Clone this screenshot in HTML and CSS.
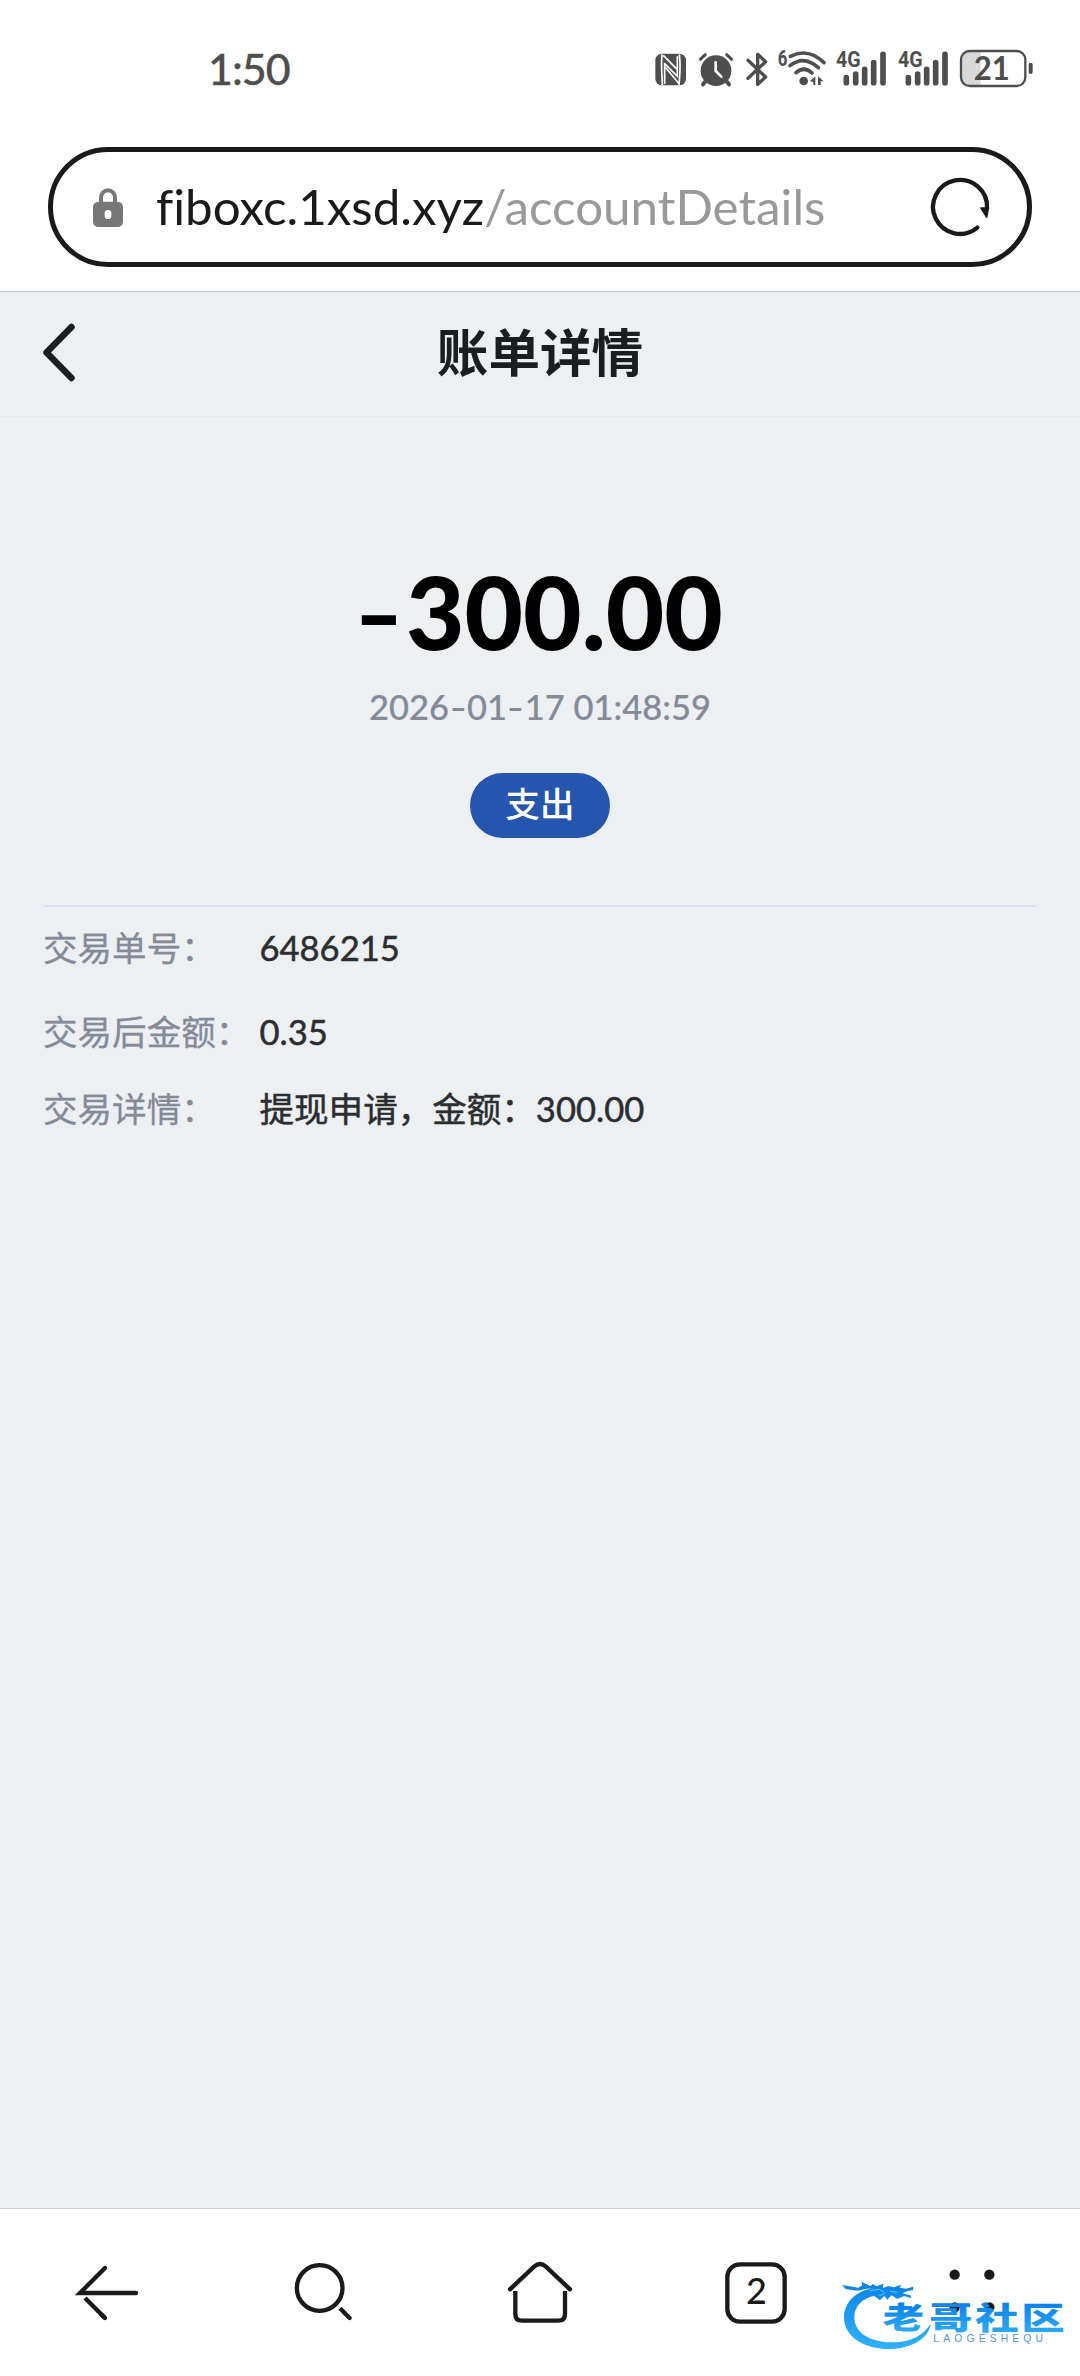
FILE: index.html
```html
<!DOCTYPE html>
<html lang="zh-CN">
<head>
<meta charset="utf-8">
<title>账单详情</title>
<link rel="stylesheet" href="styles.css">
</head>
<body>
<div class="screen">
  <div class="status">
    <span class="clock">1:50</span>
    <div class="status-icons">
      <svg width="42" height="42" viewBox="30 54 126 126">
        <rect x="46" y="71" width="92" height="95" rx="20" fill="#4e4e4e"/>
        <path d="M66 73q-2 22-1 46t2 46M118 73q3 22 2 46t-3 46" fill="none" stroke="#fff" stroke-width="5"/>
        <path d="M70 76l42 43M74 101l38 38v-60M74 98v64M76 112l40 48" fill="none" stroke="#fff" stroke-width="5"/>
      </svg>
      <svg width="48" height="42" viewBox="156 54 144 126" fill="none" stroke="#4e4e4e" stroke-linecap="round">
        <circle cx="228" cy="122" r="46" fill="#4e4e4e" stroke="none"/>
        <path d="M181 88l15-14M275 88l-15-14" stroke-width="9"/>
        <path d="M198 152l-9 11M258 152l9 11" stroke-width="12"/>
        <path d="M227 97v26l17 17" stroke="#fff" stroke-width="8"/>
      </svg>
      <svg width="34" height="42" viewBox="300 54 102 126" fill="none" stroke="#4e4e4e" stroke-width="10" stroke-linecap="round" stroke-linejoin="round">
        <path d="M324 91l53 50-24 22V73l24 22-53 50"/>
      </svg>
      <svg width="58" height="42" viewBox="402 54 174 126" fill="none" stroke="#4e4e4e" stroke-linecap="round">
        <text x="413" y="109" class="net" font-size="64" textLength="29" lengthAdjust="spacingAndGlyphs">6</text>
        <path d="M451 79Q504 52 552 98M450 107Q492 74 535 113M468 128Q492 107 516 129" stroke-width="11"/>
        <circle cx="491" cy="153" r="13" fill="#4e4e4e" stroke="none"/>
        <path d="M510 153l16-14v26h-6v-8zM534 139l17 15h-9v11h-8z" fill="#4e4e4e" stroke="none"/>
      </svg>
      <svg width="62" height="42" viewBox="576 54 186 126" stroke="#4e4e4e" stroke-width="17" stroke-linecap="round">
        <text x="588" y="112" class="net" font-size="64" textLength="74" lengthAdjust="spacingAndGlyphs">4G</text>
        <path d="M619 143v15M647 132v26M674 118v40M701 98v60M729 73v85"/>
      </svg>
      <svg width="62" height="42" viewBox="762 54 186 126" stroke="#4e4e4e" stroke-width="17" stroke-linecap="round">
        <text x="774" y="112" class="net" font-size="64" textLength="74" lengthAdjust="spacingAndGlyphs">4G</text>
        <path d="M805 143v15M833 132v26M860 118v40M887 98v60M915 73v85"/>
      </svg>
      <svg width="84" height="42" viewBox="948 54 252 126">
        <path d="M1022 64H988q-24 0-24 24v54q0 24 24 24h34z" fill="#d8d8d8"/>
        <rect x="963" y="63" width="193" height="105" rx="26" fill="none" stroke="#4e4e4e" stroke-width="7"/>
        <rect x="1166" y="98" width="12" height="34" rx="6" fill="#4e4e4e"/>
        <text x="1001" y="150" class="battery" textLength="108" lengthAdjust="spacingAndGlyphs">21</text>
      </svg>
    </div>
  </div>

  <div class="address">
    <svg class="lock" width="30" height="39" viewBox="189 174 90 117">
      <path d="M213 222v-19a21 22 0 0 1 42 0v19" fill="none" stroke="#777" stroke-width="12"/>
      <rect x="189" y="215" width="90" height="76" rx="16" fill="#777"/>
      <rect x="224" y="240" width="20" height="27" rx="10" fill="#fff"/>
    </svg>
    <span class="url">fiboxc.1xsd.xyz<span class="path">/accountDetails</span></span>
    <svg class="reload" width="60" height="60" viewBox="1170 141 180 180">
      <path d="M1312 293A81 81 0 1 1 1341 236" fill="none" stroke="#1a1a1a" stroke-width="13" stroke-linecap="round"/>
      <path d="M1323 234h22l-5 27z" fill="#1a1a1a" stroke="#1a1a1a" stroke-width="5" stroke-linejoin="round"/>
    </svg>
  </div>

  <header class="titlebar">
    <svg class="back" width="36" height="62" viewBox="0 0 36 62" fill="none" stroke="#1b1e21" stroke-width="6.5" stroke-linecap="round" stroke-linejoin="round"><path d="M29.500 6L4.500 31.500l25 25.500"/></svg>
    <h1>账单详情</h1>
  </header>

  <main class="content">
    <div class="amount"><span class="minus">-</span>300.00</div>
    <div class="date">2026<i>-</i>01<i>-</i>17 01:48:59</div>
    <div class="badge">支出</div>
    <dl class="details">
      <div class="row"><dt>交易单号：</dt><dd>6486215</dd></div>
      <div class="row second"><dt>交易后金额：</dt><dd>0.35</dd></div>
      <div class="row"><dt>交易详情：</dt><dd>提现申请，金额：300.00</dd></div>
    </dl>
  </main>

  <nav class="toolbar">
    <svg width="72" height="72" viewBox="96 201 216 216" fill="none" stroke="#1a1a1a" stroke-width="13" stroke-linecap="round">
      <path d="M195 234l-75 75h168"/><path d="M195 384l-60-60" stroke-linecap="butt"/><path d="M195 384l-10-10"/>
    </svg>
    <svg width="72" height="72" viewBox="742 201 216 216" fill="none" stroke="#1a1a1a" stroke-width="13">
      <circle cx="837" cy="294" r="68.500"/><path d="M898 355l16 16"/><path d="M914 371l13 13" stroke-linecap="round"/>
    </svg>
    <svg width="72" height="72" viewBox="72 201 216 216" fill="none" stroke="#1a1a1a" stroke-width="13">
      <path d="M90 298l73-69q17-14 34 0l73 69" stroke-linecap="round"/><path d="M106 303v69q0 20 20 20h109q20 0 20-20v-69"/>
    </svg>
    <svg width="72" height="72" viewBox="720 201 216 216">
      <rect x="742" y="223" width="172" height="172" rx="38" fill="none" stroke="#1a1a1a" stroke-width="13"/>
      <text x="829" y="342" text-anchor="middle" class="tabs">2</text>
    </svg>
    <svg width="72" height="72" viewBox="348 201 216 216" fill="#1a1a1a">
      <circle cx="404" cy="254" r="15.500"/><circle cx="508" cy="254" r="15.500"/><circle cx="404" cy="352" r="15.500"/><circle cx="508" cy="352" r="15.500"/>
    </svg>
  </nav>

  <svg class="watermark" width="260" height="186" viewBox="0 0 780 558">
    <defs><linearGradient id="blue" gradientUnits="userSpaceOnUse" x1="0" y1="280" x2="0" y2="475">
      <stop offset="0" stop-color="#0c83e8"/><stop offset="1" stop-color="#2fb2fa"/></linearGradient>
      <linearGradient id="word" gradientUnits="userSpaceOnUse" x1="0" y1="-80" x2="0" y2="8">
      <stop offset="0" stop-color="#0c82e9"/><stop offset="1" stop-color="#2ba9f7"/></linearGradient></defs>
    <path fill="url(#blue)" d="M165 294C100 302 70 345 72 387C76 445 140 480 215 477C278 473 326 445 332 402C310 437 272 456 220 457C150 458 104 428 103 384C102 350 125 325 163 318L180 331L193 318L202 329L214 316L232 327L252 318L274 325L271 316L248 310L262 303L279 301L280 290L258 296L239 293L244 284L222 292L204 288L188 295L190 281L169 289L159 282L151 288L124 275L127 286L115 293L66 285L77 297L112 302L137 297Z"/>
    <path d="M150 302l28-4 15 9M210 304l22 3M178 317l15-6" fill="none" stroke="#6fc3fb" stroke-width="3"/>
    <g class="mark" fill="url(#word)">
      <text transform="translate(186 417) skewX(-4) scale(1.28 .97)">老</text>
      <text transform="translate(327 417) scale(1.36 .97)">哥</text>
      <text transform="translate(466 417) scale(1.36 .97)">社</text>
      <text transform="translate(604 417) scale(1.36 .97)">区</text>
    </g>
    <text x="340" y="456" class="pinyin" textLength="329">LAOGESHEQU</text>
  </svg>
</div>
</body>
</html>
```
FILE: styles.css
```css
* { box-sizing: border-box; }
body { margin: 0; background: #ecf0f3; }
.screen {
  position: relative;
  display: flex;
  flex-direction: column;
  width: 1080px;
  height: 2376px;
  overflow: hidden;
  font-family: Lato, "Noto Sans CJK SC", sans-serif;
  color: #2b2d31;
}
svg { display: block; flex: none; overflow: visible; }

.status {
  display: flex;
  justify-content: space-between;
  align-items: center;
  height: 147px;
  padding: 0 40px 9px 208px;
  background: #fff;
}
.clock { font-size: 43px; line-height: 52px; letter-spacing: -1px; color: #4e4e4e; font-weight: 500; -webkit-text-stroke: .3px #4e4e4e; }
.status-icons { display: flex; }
.net { font-family: Roboto, sans-serif; font-weight: 700; fill: #4e4e4e; stroke: none; }
.battery { font-family: Lato, sans-serif; font-weight: 700; font-size: 95px; fill: #4e4e4e; }

.address {
  display: flex;
  align-items: center;
  height: 120px;
  padding: 0 37px 0 40px;
  border: 5px solid #1a1a1a;
  border-radius: 60px;
  background: #fff;
  margin: 0 48px;
  box-shadow: 0 0 0 200px #fff;
  clip-path: inset(0 -48px -24px -48px);
}
.url { margin: 0 0 2px 33px; flex: 1; font-size: 49.300px; line-height: 60px; color: #1a1a1a; white-space: nowrap; font-variant-ligatures: none; }
.path { color: #999; }

.titlebar {
  display: grid;
  grid-template-columns: 80px 1fr 80px;
  align-items: center;
  height: 126px;
  margin-top: 24px;
  border-top: 1px solid #c7cbce;
  border-bottom: 1px solid #e6e9ed;
  background: #ecf0f3;
  padding: 0 0 4px;
}
.back { margin-left: 42px; }
h1 { margin: 0; text-align: center; font-size: 51.600px; line-height: 70px; font-weight: 700; color: #1b1e21; }

.content { flex: 1; display: flex; flex-direction: column; align-items: center; padding: 134px 43px 0; }
.amount { font-size: 101px; line-height: 120px; font-weight: 900; color: #000; }
.minus { display: inline-block; transform: scale(1.28, .85); transform-origin: 50% 62%; margin-right: 8px; margin-left: 3px; }
.date { margin-top: 10px; font-size: 34.500px; line-height: 52px; color: #858a99; font-weight: 500; -webkit-text-stroke: .2px #858a99; }
.date i { display: inline-block; font-style: normal; transform: scaleX(1.3); margin: 0 2.500px; }
.badge { margin-top: 40px; width: 140px; height: 65px; border-radius: 33px; background: #2555ac; color: #fff; font-size: 34.500px; line-height: 61px; text-align: center; font-weight: 500; }
.details { width: 100%; margin: 67px 0 0; border-top: 2px solid #dce2ef; padding-top: 15px; font-size: 34.560px; line-height: 52px; }
.row { display: flex; }
.second { margin: 32px 0 25px; }
dt { width: 216.500px; color: #858a99; white-space: nowrap; -webkit-text-stroke: .3px #858a99; }
dd { margin: 0; -webkit-text-stroke: .5px #2b2d31; }

.toolbar { display: flex; justify-content: space-around; height: 168px; padding-top: 48px; background: #fff; border-top: 1px solid #c7cacd; }
.tabs { font-size: 108px; fill: #1a1a1a; font-weight: 500; }
.watermark { position: absolute; right: 0; bottom: 0; }
.mark { font-family: "Noto Sans CJK SC", sans-serif; font-weight: 900; font-size: 96px; }
.pinyin { font-family: "Liberation Sans", sans-serif; font-size: 31px; fill: #5597d2; }
```
